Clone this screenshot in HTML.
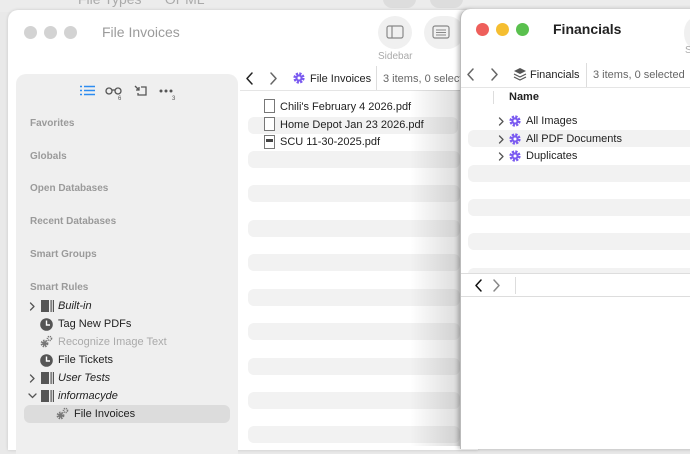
<!DOCTYPE html>
<html><head><meta charset="utf-8"><style>
*{margin:0;padding:0;box-sizing:border-box}
body{width:690px;height:446px;overflow:hidden;background:#e9e9e9;font-family:"Liberation Sans",sans-serif;position:relative;font-size:11px;color:#222}
.abs{position:absolute}
.win{position:absolute;background:#fff}
.tl{position:absolute;width:13px;height:13px;border-radius:50%}
.stripe{position:absolute;height:17px;background:#f2f2f2;border-radius:6px}
.hdr{position:absolute;left:30px;color:#9a9a9a;font-weight:bold;font-size:10px}
.item{position:absolute;font-size:11px;color:#222}
</style></head><body>
<svg width="0" height="0" style="position:absolute">
<defs>
<g id="gear"><circle cx="6" cy="6" r="4.3" fill="none" stroke="currentColor" stroke-width="2.6" stroke-dasharray="2.2 1.2"/><circle cx="6" cy="6" r="3.6" fill="currentColor"/><circle cx="6" cy="6" r="1.5" fill="#fff"/></g>
<g id="cl"><path d="M7 1L2 6.5 7 12" fill="none" stroke="currentColor" stroke-width="1.5" stroke-linecap="round" stroke-linejoin="round"/></g>
<g id="cr"><path d="M2 1l5 5.5L2 12" fill="none" stroke="currentColor" stroke-width="1.5" stroke-linecap="round" stroke-linejoin="round"/></g>
<g id="sc"><path d="M1.5 1l3.5 3.5L1.5 8" fill="none" stroke="currentColor" stroke-width="1.3" stroke-linecap="round" stroke-linejoin="round"/></g>
<g id="book"><rect x="0" y="0" width="8" height="12" fill="#555"/><rect x="9.5" y="0" width="1.2" height="12" fill="#555"/><rect x="11.8" y="0" width="1.2" height="12" fill="#555"/></g>
<g id="clock"><circle cx="6.5" cy="6.5" r="6.3" fill="#555"/><path d="M6.5 2.5v4.5h3.5" stroke="#fff" stroke-width="1.4" fill="none"/></g>
<g id="gears"><circle cx="4.5" cy="8.5" r="2.8" fill="none" stroke="currentColor" stroke-width="2.2" stroke-dasharray="1.4 0.9"/><circle cx="4.5" cy="8.5" r="2.2" fill="currentColor"/><circle cx="9.5" cy="3.5" r="2" fill="none" stroke="currentColor" stroke-width="1.6" stroke-dasharray="1.1 0.8"/></g>
</defs></svg>
<!-- background window top -->
<div class="abs" style="left:0;top:0;width:690px;height:12px;background:#ececec"></div>
<div class="abs" style="left:78px;top:-9px;color:#aaa;font-size:14px">File Types&nbsp;&nbsp;&nbsp;&nbsp;&nbsp;&nbsp;OPML</div>
<div class="abs" style="left:383px;top:-10px;width:33px;height:18px;border-radius:10px;background:#ddd"></div>
<div class="abs" style="left:430px;top:-10px;width:33px;height:18px;border-radius:10px;background:#ddd"></div>

<!-- left window -->
<div class="win" style="left:8px;top:10px;width:470px;height:440px;border-radius:10px 10px 0 0;box-shadow:0 0 3px rgba(0,0,0,.15)"></div>
<div class="tl" style="left:24px;top:26px;background:#d3d3d3"></div>
<div class="tl" style="left:44px;top:26px;background:#d3d3d3"></div>
<div class="tl" style="left:64px;top:26px;background:#d3d3d3"></div>
<div class="abs" style="left:102px;top:24px;color:#9b9b9b;font-size:14px">File Invoices</div>
<div class="abs" style="left:378px;top:16px;width:34px;height:33px;border-radius:50%;background:#f0f0f0"></div>
<svg class="abs" style="left:386px;top:25px" width="18" height="15"><rect x="1" y="1" width="16" height="12" rx="2" fill="none" stroke="#888" stroke-width="1.2"/><line x1="6" y1="1" x2="6" y2="13" stroke="#888" stroke-width="1.2"/></svg>
<div class="abs" style="left:424px;top:16px;width:40px;height:33px;border-radius:17px;background:#f0f0f0"></div>
<svg class="abs" style="left:432px;top:25px" width="18" height="15"><rect x="1" y="1" width="16" height="12" rx="2" fill="none" stroke="#888" stroke-width="1.2"/><path d="M4 5h10M4 7.5h10M4 10h10" stroke="#888"/></svg>
<div class="abs" style="left:378px;top:51px;color:#aaa;font-size:10px">Sidebar</div>

<!-- sidebar -->
<div class="abs" style="left:16px;top:74px;width:222px;height:380px;background:#efefef;border-radius:10px 10px 0 0"></div>
<svg class="abs" style="left:80px;top:85px" width="16" height="12"><path d="M0 1.5h2M0 5.5h2M0 9.5h2M4 1.5h11M4 5.5h11M4 9.5h11" stroke="#2d8cf0" stroke-width="1.6"/></svg>
<svg class="abs" style="left:105px;top:86px" width="18" height="14"><circle cx="4" cy="5" r="3" fill="none" stroke="#555" stroke-width="1.3"/><circle cx="13" cy="5" r="3" fill="none" stroke="#555" stroke-width="1.3"/><path d="M7 4h3" stroke="#555" stroke-width="1.3"/><text x="13" y="14" font-size="6" fill="#555" font-family="Liberation Sans">6</text></svg>
<svg class="abs" style="left:134px;top:85px" width="14" height="12"><path d="M1 1l4 4M5 2v3H2M7 2h5v8H4V8" fill="none" stroke="#555" stroke-width="1.3"/></svg>
<svg class="abs" style="left:159px;top:87px" width="18" height="14"><circle cx="2" cy="4" r="1.5" fill="#555"/><circle cx="7" cy="4" r="1.5" fill="#555"/><circle cx="12" cy="4" r="1.5" fill="#555"/><text x="13" y="13" font-size="6" fill="#555" font-family="Liberation Sans">3</text></svg>

<div class="hdr" style="top:118px">Favorites</div>
<div class="hdr" style="top:151px">Globals</div>
<div class="hdr" style="top:183px">Open Databases</div>
<div class="hdr" style="top:216px">Recent Databases</div>
<div class="hdr" style="top:249px">Smart Groups</div>
<div class="hdr" style="top:282px">Smart Rules</div>

<div class="abs" style="left:24px;top:405px;width:206px;height:18px;background:#dcdcdc;border-radius:6px"></div>
<svg class="abs" style="left:29px;top:302px;color:#555" width="8" height="9"><use href="#sc"/></svg>
<svg class="abs" style="left:29px;top:374px;color:#555" width="8" height="9"><use href="#sc"/></svg>
<svg class="abs" style="left:28px;top:393px" width="9" height="6"><path d="M1 1l3.5 3.5L8 1" fill="none" stroke="#555" stroke-width="1.3" stroke-linecap="round"/></svg>
<svg class="abs" style="left:41px;top:300px" width="13" height="12"><use href="#book"/></svg>
<svg class="abs" style="left:41px;top:372px" width="13" height="12"><use href="#book"/></svg>
<svg class="abs" style="left:41px;top:390px" width="13" height="12"><use href="#book"/></svg>
<svg class="abs" style="left:40px;top:318px" width="13" height="13"><use href="#clock"/></svg>
<svg class="abs" style="left:40px;top:354px" width="13" height="13"><use href="#clock"/></svg>
<svg class="abs" style="left:40px;top:335px;color:#777" width="13" height="13"><use href="#gears"/></svg>
<svg class="abs" style="left:56px;top:407px;color:#777" width="13" height="13"><use href="#gears"/></svg>
<div class="item" style="left:58px;top:300px;font-style:italic">Built-in</div>
<div class="item" style="left:58px;top:318px">Tag New PDFs</div>
<div class="item" style="left:58px;top:336px;color:#aaa">Recognize Image Text</div>
<div class="item" style="left:58px;top:354px">File Tickets</div>
<div class="item" style="left:58px;top:372px;font-style:italic">User Tests</div>
<div class="item" style="left:58px;top:390px;font-style:italic">informacyde</div>
<div class="item" style="left:74px;top:408px">File Invoices</div>

<!-- left content -->
<svg class="abs" style="left:245px;top:72px;color:#222" width="9" height="14"><use href="#cl"/></svg>
<svg class="abs" style="left:269px;top:72px;color:#666" width="9" height="14"><use href="#cr"/></svg>
<svg class="abs" style="left:293px;top:72px;color:#7a5af0" width="12" height="12"><use href="#gear"/></svg>
<div class="item" style="left:310px;top:73px">File Invoices</div>
<div class="abs" style="left:376px;top:66px;width:1px;height:24px;background:#ddd"></div>
<div class="item" style="left:383px;top:73px;color:#666">3 items, 0 selected</div>
<div class="abs" style="left:240px;top:90px;width:220px;height:1px;background:#e5e5e5"></div>
<div class="stripe" style="left:248px;top:117px;width:210px"></div>
<svg class="abs" style="left:264px;top:99px" width="11" height="14"><rect x=".5" y=".5" width="10" height="13" fill="#fff" stroke="#777"/></svg>
<svg class="abs" style="left:264px;top:117px" width="11" height="14"><rect x=".5" y=".5" width="10" height="13" fill="#fff" stroke="#777"/></svg>
<svg class="abs" style="left:264px;top:135px" width="11" height="14"><rect x=".5" y=".5" width="10" height="13" fill="#fff" stroke="#777"/><rect x="2" y="4" width="7" height="3" fill="#444"/></svg>
<div class="item" style="left:280px;top:101px">Chili's February 4 2026.pdf</div>
<div class="item" style="left:280px;top:119px">Home Depot Jan 23 2026.pdf</div>
<div class="item" style="left:280px;top:136px">SCU 11-30-2025.pdf</div>
<div class="stripe" style="left:248px;top:151px;width:212px"></div>
<div class="stripe" style="left:248px;top:185px;width:212px"></div>
<div class="stripe" style="left:248px;top:220px;width:212px"></div>
<div class="stripe" style="left:248px;top:254px;width:212px"></div>
<div class="stripe" style="left:248px;top:289px;width:212px"></div>
<div class="stripe" style="left:248px;top:323px;width:212px"></div>
<div class="stripe" style="left:248px;top:358px;width:212px"></div>
<div class="stripe" style="left:248px;top:392px;width:212px"></div>
<div class="stripe" style="left:248px;top:426px;width:212px"></div>
<div class="abs" style="left:410px;top:90px;width:50px;height:356px;background:linear-gradient(to right,rgba(0,0,0,0),rgba(0,0,0,.14))"></div>

<!-- right window -->
<div class="win" style="left:460px;top:9px;width:240px;height:440px;border-radius:10px 0 0 0;box-shadow:-2px 0 4px rgba(0,0,0,.25);border-left:1px solid #bbb"></div>
<div class="tl" style="left:476px;top:23px;background:#ee5f5b"></div>
<div class="tl" style="left:496px;top:23px;background:#f5be31"></div>
<div class="tl" style="left:516px;top:23px;background:#5ac04e"></div>
<div class="abs" style="left:553px;top:21px;font-size:14px;font-weight:bold;color:#222">Financials</div>
<div class="abs" style="left:684px;top:18px;width:20px;height:30px;border-radius:50%;background:#f0f0f0"></div>
<div class="abs" style="left:685px;top:45px;color:#aaa;font-size:10px">S</div>
<svg class="abs" style="left:466px;top:68px;color:#666" width="9" height="14"><use href="#cl"/></svg>
<svg class="abs" style="left:490px;top:68px;color:#666" width="9" height="14"><use href="#cr"/></svg>
<svg class="abs" style="left:513px;top:67px" width="14" height="14"><path d="M7 1l6 3-6 3-6-3z" fill="#555"/><path d="M1 7l6 3 6-3M1 10l6 3 6-3" fill="none" stroke="#555" stroke-width="1.2"/></svg>
<div class="item" style="left:530px;top:69px">Financials</div>
<div class="abs" style="left:586px;top:63px;width:1px;height:24px;background:#ddd"></div>
<div class="item" style="left:593px;top:69px;color:#666">3 items, 0 selected</div>
<div class="abs" style="left:461px;top:87px;width:230px;height:1px;background:#e5e5e5"></div>
<div class="abs" style="left:493px;top:91px;width:1px;height:13px;background:#ddd"></div>
<div class="item" style="left:509px;top:91px;font-weight:bold">Name</div>
<div class="stripe" style="left:468px;top:130px;width:230px"></div>
<div class="stripe" style="left:468px;top:165px;width:230px"></div>
<div class="stripe" style="left:468px;top:199px;width:230px"></div>
<div class="stripe" style="left:468px;top:233px;width:230px"></div>
<div class="stripe" style="left:468px;top:268px;width:230px"></div>
<svg class="abs" style="left:498px;top:117px;color:#555" width="8" height="9"><use href="#sc"/></svg>
<svg class="abs" style="left:498px;top:135px;color:#555" width="8" height="9"><use href="#sc"/></svg>
<svg class="abs" style="left:498px;top:152px;color:#555" width="8" height="9"><use href="#sc"/></svg>
<svg class="abs" style="left:509px;top:115px;color:#7a5af0" width="12" height="12"><use href="#gear"/></svg>
<svg class="abs" style="left:509px;top:133px;color:#7a5af0" width="12" height="12"><use href="#gear"/></svg>
<svg class="abs" style="left:509px;top:150px;color:#7a5af0" width="12" height="12"><use href="#gear"/></svg>
<div class="item" style="left:526px;top:115px">All Images</div>
<div class="item" style="left:526px;top:133px">All PDF Documents</div>
<div class="item" style="left:526px;top:150px">Duplicates</div>
<div class="abs" style="left:461px;top:273px;width:230px;height:24px;background:#fff;border-top:1px solid #ddd;border-bottom:1px solid #ddd"></div>
<svg class="abs" style="left:474px;top:279px;color:#111" width="9" height="14"><use href="#cl"/></svg>
<svg class="abs" style="left:492px;top:279px;color:#888" width="9" height="14"><use href="#cr"/></svg>
<div class="abs" style="left:515px;top:277px;width:1px;height:17px;background:#ddd"></div>
</body></html>
